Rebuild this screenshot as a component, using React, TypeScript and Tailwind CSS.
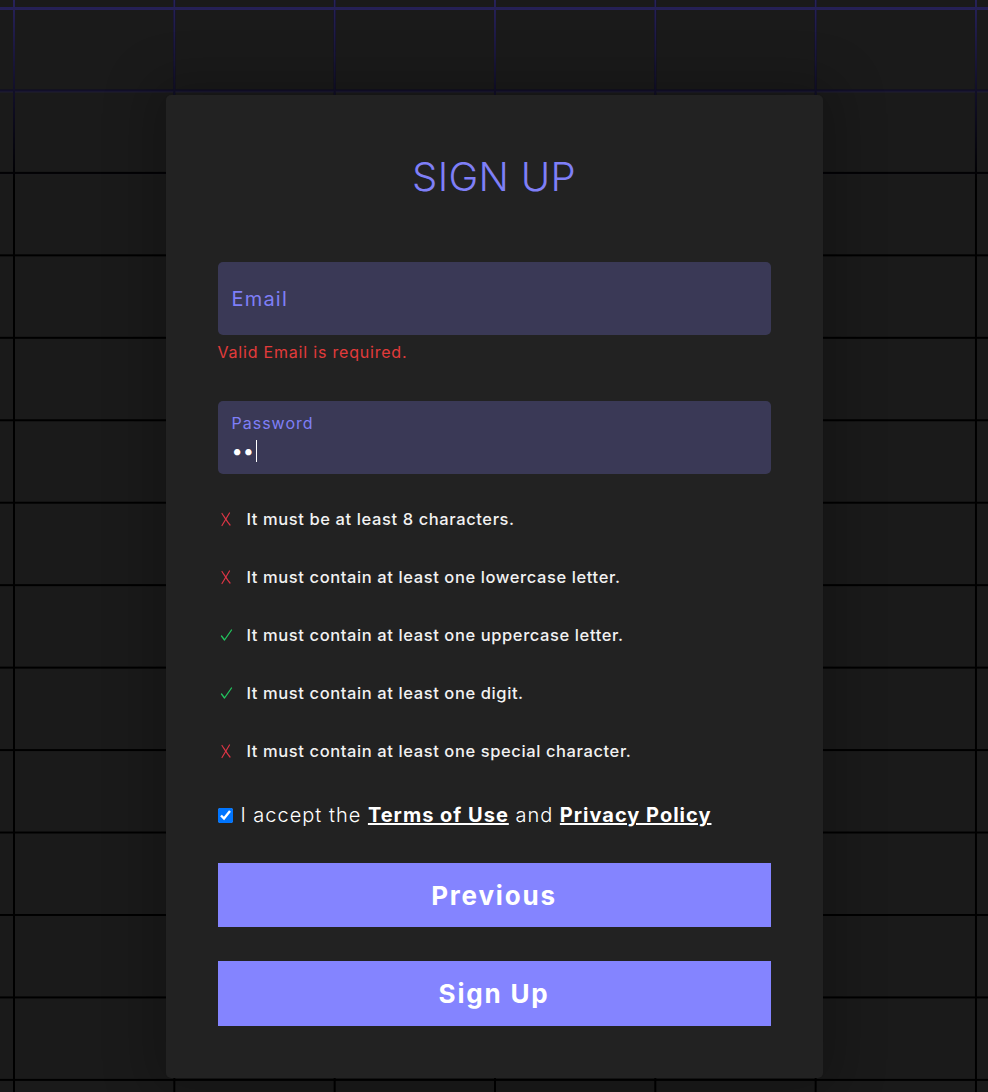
import React, { useState } from 'react';

const rules = [
  { text: 'It must be at least 8 characters.', ok: false },
  { text: 'It must contain at least one lowercase letter.', ok: false },
  { text: 'It must contain at least one uppercase letter.', ok: true },
  { text: 'It must contain at least one digit.', ok: true },
  { text: 'It must contain at least one special character.', ok: false },
];

const CrossMark = () => (
  <svg width="12" height="16" viewBox="0 0 12 16" fill="none" stroke="#dc3545" strokeWidth="1.2" strokeLinecap="round">
    <path d="M2 2.5 C4.5 6 7 10.5 10 14" />
    <path d="M9.5 2 C7 6 4.5 10.5 2 14.5" />
  </svg>
);

const CheckMark = () => (
  <svg width="13" height="14" viewBox="0 0 13 14" fill="none" stroke="#22c55e" strokeWidth="1.3" strokeLinecap="round" strokeLinejoin="round">
    <path d="M1.5 8 L4.5 12 L11.5 2" />
  </svg>
);

const App: React.FC = () => {
  const [email, setEmail] = useState('');
  const [accepted, setAccepted] = useState(true);

  return (
    <div className="relative min-h-screen overflow-hidden bg-[#1a1a1a] font-['Inter',sans-serif] bg-[linear-gradient(to_right,#000_2px,transparent_2px),linear-gradient(to_bottom,#000_2px,transparent_2px)] bg-[size:160.33px_82.46px] bg-[position:13px_7px]">
      {/* purple tint on the top grid lines */}
      <div className="pointer-events-none absolute inset-x-0 top-0 h-[260px] bg-[linear-gradient(to_right,#27225a_2px,transparent_2px),linear-gradient(to_bottom,#27225a_3px,transparent_3px)] bg-[size:160.33px_82.46px] bg-[position:13px_7px] [mask-image:linear-gradient(to_bottom,black_0%,rgba(0,0,0,0.45)_35%,transparent_70%)]" />

      <div className="relative flex justify-center pt-[95px] pb-[14px]">
        <div className="w-[657px] rounded-[5px] bg-[#222222] px-[52px] pt-[56px] pb-[52px] shadow-[0_0_50px_15px_rgba(0,0,0,0.22)]">
          <h1 className="text-center text-[40px] leading-[52px] font-light tracking-[0.3px] text-[#7f7ff7]">
            SIGN UP
          </h1>

          {/* Email */}
          <div className="mt-[59px]">
            <input
              type="email"
              value={email}
              onChange={(e) => setEmail(e.target.value)}
              placeholder="Email"
              className="h-[73px] w-full rounded-[5px] bg-[#3a3956] px-[14px] text-[20px] tracking-[1.2px] text-white outline-none placeholder:text-[#7f7ff7]"
            />
            <p className="mt-[5px] text-[16px] leading-6 tracking-[0.8px] text-[#e23b3b]">Valid Email is required.</p>
          </div>

          {/* Password */}
          <div className="mt-[37px] flex h-[73px] flex-col justify-center rounded-[5px] bg-[#3a3956] px-[14px]">
            <span className="text-[16px] leading-5 tracking-[1px] text-[#7f7ff7]">Password</span>
            <div className="mt-[6px] flex h-6 items-center">
              <span className="text-[20px] leading-none text-white">••</span>
              <span className="ml-[2px] h-[22px] w-px bg-white" />
            </div>
          </div>

          {/* Requirements */}
          <ul className="mt-[33px] flex flex-col gap-[34px]">
            {rules.map((r) => (
              <li key={r.text} className="flex h-6 items-center text-[16.5px] font-medium tracking-[0.6px] text-[#f2f2f2]">
                <span className="flex w-[29px] items-center pl-[2px]">
                  {r.ok ? <CheckMark /> : <CrossMark />}
                </span>
                <span>{r.text}</span>
              </li>
            ))}
          </ul>

          {/* Terms */}
          <label className="mt-[37px] flex h-[30px] items-center text-[20px] tracking-[1px] text-white">
            <input
              type="checkbox"
              checked={accepted}
              onChange={(e) => setAccepted(e.target.checked)}
              className="mr-[8px] h-[15px] w-[15px] accent-[#0075ff]"
            />
            <span className="font-light">
              I accept the <a className="font-bold underline">Terms of Use</a> and{' '}
              <a className="font-bold underline">Privacy Policy</a>
            </span>
          </label>

          {/* Buttons */}
          <button className="mt-[33px] h-[64px] w-full bg-[#8484ff] text-[26px] font-bold tracking-[1.8px] text-white">
            Previous
          </button>
          <button className="mt-[34px] h-[65px] w-full bg-[#8484ff] text-[26px] font-bold tracking-[1.8px] text-white">
            Sign Up
          </button>
        </div>
      </div>
    </div>
  );
};

export default App;
